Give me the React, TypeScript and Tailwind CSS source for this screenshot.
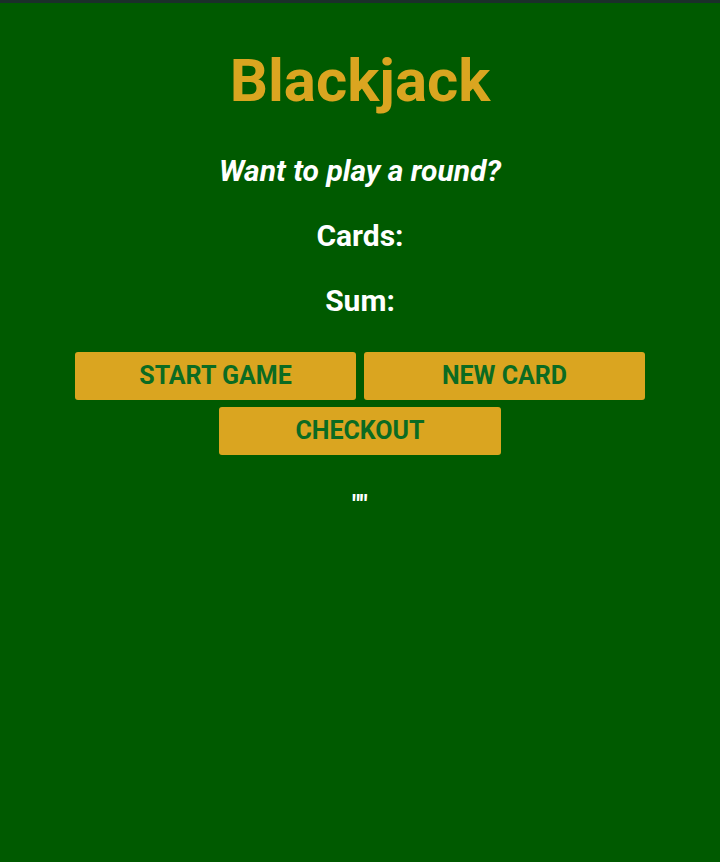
import React from "react";

export default function App() {
  return (
    <div className="min-h-[862px] w-full bg-[#005a00] border-t-[3px] border-[#1b2f2a] text-white text-center" style={{ fontFamily: "Roboto, 'Liberation Sans', sans-serif" }}>
      <h1 className="pt-[40px] text-[60px] leading-[76px] font-bold text-[#daa520]">Blackjack</h1>
      <p className="mt-[34px] text-[30px] leading-[36px] font-bold italic">Want to play a round?</p>
      <p className="mt-[29px] text-[30px] leading-[36px] font-bold">Cards:</p>
      <p className="mt-[29px] text-[30px] leading-[36px] font-bold">Sum:</p>
      <div className="mt-[33px] flex flex-wrap justify-center gap-x-[8px] gap-y-[7px] px-[75px]">
        <button className="w-[281px] h-[48px] rounded-[3px] bg-[#daa520] text-[#0b6b22] text-[25px] font-bold">START GAME</button>
        <button className="w-[281px] h-[48px] rounded-[3px] bg-[#daa520] text-[#0b6b22] text-[25px] font-bold">NEW CARD</button>
        <button className="w-[282px] h-[48px] rounded-[3px] bg-[#daa520] text-[#0b6b22] text-[25px] font-bold">CHECKOUT</button>
      </div>
      <p className="mt-[34px] text-[26px] leading-[30px] font-bold">""</p>
    </div>
  );
}
